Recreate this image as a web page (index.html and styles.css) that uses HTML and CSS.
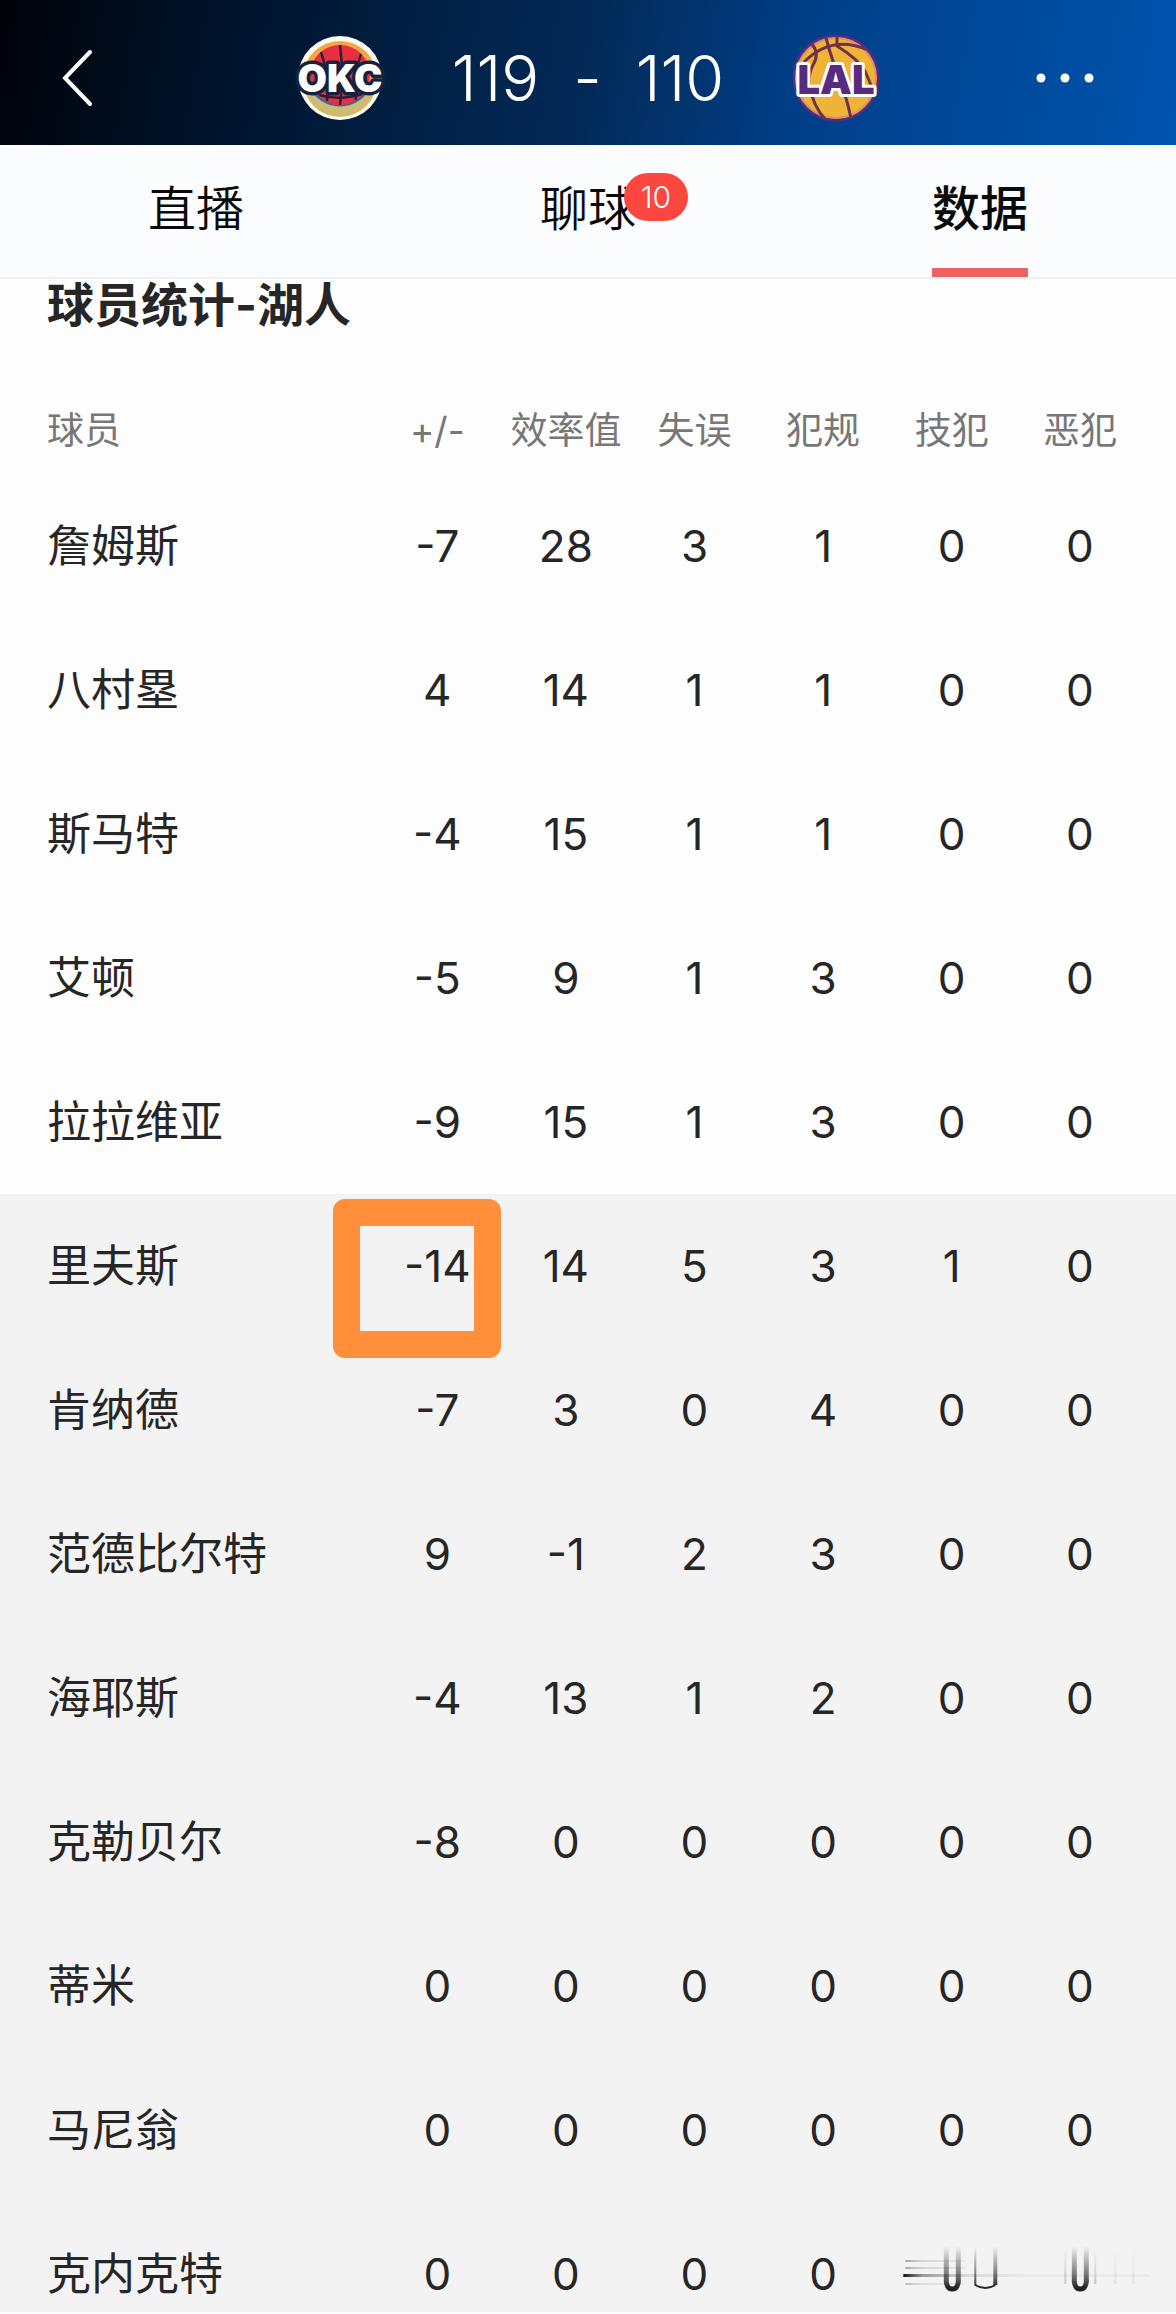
FILE: index.html
```html
<!DOCTYPE html>
<html lang="zh-CN">
<head>
  <meta charset="UTF-8">
  <meta name="viewport" content="width=device-width, initial-scale=1">
  <title>球员统计-湖人</title>
  <link rel="stylesheet" href="styles.css">
</head>
<body>
  <header class="topbar">
    <button class="icon-btn back" aria-label="返回">
      <svg width="32" height="58" viewBox="0 0 32 58"><path d="M28 3 L3 29 L28 55" fill="none" stroke="#fff" stroke-width="4" stroke-linecap="round"/></svg>
    </button>

    <div class="match">
      <svg class="logo" viewBox="0 0 88 88">
        <circle cx="44" cy="44" r="42" fill="#fffdf0"/>
        <circle cx="44" cy="44" r="37" fill="#f2a644"/>
        <path d="M7 46 A37 37 0 0 0 81 46 Z" fill="#cdbc72"/>
        <path d="M12 50 A34 34 0 0 0 76 50 Z" fill="#2b6ca8"/>
        <path d="M16 52 A30 28 0 0 0 72 52 Z" fill="#fff"/>
        <circle cx="44" cy="41" r="30" fill="#e92f3f"/>
        <g fill="none" stroke="#2b1c3a" stroke-width="2.5">
          <path d="M44 11 Q48 42 44 71"/>
          <path d="M25 18 Q34 44 31 67"/>
          <path d="M65 20 Q56 44 60 66"/>
          <path d="M23 61 Q44 67 66 60"/>
        </g>
        <text class="logo-text okc" x="44" y="58" text-anchor="middle">OKC</text>
      </svg>
      <span class="score">119</span>
      <span class="score">-</span>
      <span class="score">110</span>
      <svg class="logo" viewBox="0 0 88 88">
        <circle cx="44" cy="44" r="42" fill="#efb336" stroke="#582b80" stroke-width="3"/>
        <circle cx="44" cy="44" r="40" fill="none" stroke="#d9916c" stroke-width="2"/>
        <g fill="none" stroke="#71304a" stroke-width="3">
          <path d="M12 28 Q40 0 76 16"/>
          <path d="M20 10 Q28 20 21 31 Q17 38 17 50 Q21 73 34 86"/>
          <path d="M34 4 Q41 30 51 54 Q56 70 59 84"/>
          <path d="M45 2 V12 Q66 25 73 37 Q78 48 81 57"/>
        </g>
        <text class="logo-text lal" x="44" y="60" text-anchor="middle">LAL</text>
      </svg>
    </div>

    <button class="icon-btn more" aria-label="更多">
      <svg width="58" height="12" viewBox="0 0 58 12" fill="#fff"><circle cx="5" cy="6" r="4.5"/><circle cx="29" cy="6" r="4.5"/><circle cx="53" cy="6" r="4.5"/></svg>
    </button>
  </header>

  <nav class="tabs">
    <a href="#live">直播</a>
    <a href="#chat"><span class="tab-label">聊球<span class="badge">10</span></span></a>
    <a href="#data" class="active">数据</a>
  </nav>

  <main id="data">
    <h1>球员统计-湖人</h1>

    <table class="stats">
      <colgroup>
        <col class="col-name">
        <col span="5">
        <col class="col-last">
      </colgroup>
      <thead>
        <tr><th>球员</th><th>+/-</th><th>效率值</th><th>失误</th><th>犯规</th><th>技犯</th><th>恶犯</th></tr>
      </thead>
      <!-- 首发 -->
      <tbody>
        <tr><td>詹姆斯</td><td>-7</td><td>28</td><td>3</td><td>1</td><td>0</td><td>0</td></tr>
        <tr><td>八村塁</td><td>4</td><td>14</td><td>1</td><td>1</td><td>0</td><td>0</td></tr>
        <tr><td>斯马特</td><td>-4</td><td>15</td><td>1</td><td>1</td><td>0</td><td>0</td></tr>
        <tr><td>艾顿</td><td>-5</td><td>9</td><td>1</td><td>3</td><td>0</td><td>0</td></tr>
        <tr><td>拉拉维亚</td><td>-9</td><td>15</td><td>1</td><td>3</td><td>0</td><td>0</td></tr>
      </tbody>
      <!-- 替补 -->
      <tbody class="bench">
        <tr><td>里夫斯</td><td class="marked">-14</td><td>14</td><td>5</td><td>3</td><td>1</td><td>0</td></tr>
        <tr><td>肯纳德</td><td>-7</td><td>3</td><td>0</td><td>4</td><td>0</td><td>0</td></tr>
        <tr><td>范德比尔特</td><td>9</td><td>-1</td><td>2</td><td>3</td><td>0</td><td>0</td></tr>
        <tr><td>海耶斯</td><td>-4</td><td>13</td><td>1</td><td>2</td><td>0</td><td>0</td></tr>
        <tr><td>克勒贝尔</td><td>-8</td><td>0</td><td>0</td><td>0</td><td>0</td><td>0</td></tr>
        <tr><td>蒂米</td><td>0</td><td>0</td><td>0</td><td>0</td><td>0</td><td>0</td></tr>
        <tr><td>马尼翁</td><td>0</td><td>0</td><td>0</td><td>0</td><td>0</td><td>0</td></tr>
        <tr class="last">
          <td>克内克特</td><td>0</td><td>0</td><td>0</td><td>0</td>
          <td colspan="2" class="smear">
            <svg viewBox="0 0 288 110" aria-hidden="true">
              <defs>
                <linearGradient id="down" gradientUnits="userSpaceOnUse" x1="0" y1="44" x2="0" y2="86">
                  <stop offset="0" stop-color="#222" stop-opacity="0"/>
                  <stop offset=".7" stop-color="#222" stop-opacity=".6"/>
                  <stop offset="1" stop-color="#222"/>
                </linearGradient>
                <linearGradient id="across" gradientUnits="userSpaceOnUse" x1="16" y1="0" x2="140" y2="0">
                  <stop offset="0" stop-color="#111"/>
                  <stop offset=".15" stop-color="#111" stop-opacity=".4"/>
                  <stop offset=".5" stop-color="#111" stop-opacity=".12"/>
                  <stop offset="1" stop-color="#111" stop-opacity=".04"/>
                </linearGradient>
              </defs>
              <g fill="none" stroke="url(#down)">
                <path d="M59 45 V80 Q60 87 65 87 Q70 87 71 80 V45" stroke-width="5"/>
                <path d="M187 45 V80 Q188 87 193 87 Q198 87 199 80 V45" stroke-width="5"/>
                <path d="M88 45 V83 Q98 89 108 83" stroke-width="2"/>
                <path d="M108 45 V83" stroke-width="4"/>
                <path d="M178 50 V82 M208 50 V82" stroke-width="2" opacity=".25"/>
                <path d="M228 50 V82 M246 50 V82" stroke-width="3" opacity=".08"/>
              </g>
              <g fill="url(#across)">
                <rect x="16" y="72" width="246" height="3"/>
                <rect x="18" y="58" width="60" height="2" opacity=".35"/>
                <rect x="18" y="65" width="60" height="2" opacity=".35"/>
                <rect x="18" y="81" width="60" height="2" opacity=".25"/>
              </g>
            </svg>
          </td>
        </tr>
      </tbody>
    </table>
  </main>
</body>
</html>
```

FILE: styles.css
```css
* {
  box-sizing: border-box;
}

body {
  margin: 0;
  background: #fdfdfd;
  color: #262626;
  font-family: Inter, "Noto Sans CJK SC", sans-serif;
}

/* 顶部比分栏 */
.topbar {
  display: grid;
  grid-template-columns: 1fr auto 1fr;
  align-items: center;
  height: 145px;
  padding: 10px 62px 0;
  background: linear-gradient(100deg, #000308 0%, #001530 22%, #032a58 50%, #003f88 68%, #0054ae 100%);
  color: #fff;
}

.icon-btn {
  display: flex;
  padding: 0;
  border: none;
  background: none;
  cursor: pointer;
}

.back {
  justify-self: start;
}

.more {
  justify-self: end;
  padding-right: 20px;
}

.match {
  display: flex;
  align-items: center;
  gap: 34px;
}

.logo {
  width: 88px;
  height: 88px;
  overflow: visible;
}

.logo:first-child {
  margin-right: 34px;
}

.logo:last-child {
  margin-left: 34px;
}

.logo-text {
  font-family: Inter, sans-serif;
  font-weight: 900;
  paint-order: stroke;
  stroke-linejoin: round;
}

.okc {
  font-size: 38px;
  fill: #fff;
  stroke: #16213f;
  stroke-width: 7px;
}

.lal {
  font-size: 40px;
  fill: #582b80;
  stroke: #fff;
  stroke-width: 6px;
}

.score {
  font-size: 63px;
  font-weight: 300;
  line-height: 72px;
}

/* 标签页 */
.tabs {
  display: flex;
  height: 134px;
  background: #fbfcfd;
  border-bottom: 2px solid #f0f1f3;
}

.tabs a {
  flex: 1;
  display: flex;
  flex-direction: column;
  align-items: center;
  padding-top: 28px;
  color: #0a0a0a;
  font-size: 48px;
  font-weight: 350;
  line-height: 72px;
  text-decoration: none;
}

.tabs .active {
  font-weight: 500;
}

.tabs .active::after {
  content: "";
  width: 96px;
  height: 9px;
  margin-top: auto;
  background: #ec6262;
}

.tab-label {
  position: relative;
}

.badge {
  position: absolute;
  top: 0;
  left: 84px;
  width: 64px;
  height: 48px;
  border-radius: 24px;
  background: #fb4740;
  color: #fff;
  font-size: 30px;
  line-height: 48px;
  text-align: center;
}

/* 球员统计 */
h1 {
  margin: 0;
  padding: 0 47px;
  font-size: 47px;
  font-weight: 700;
  line-height: 52px;
}

.stats {
  width: 100%;
  table-layout: fixed;
  border-collapse: collapse;
}

.col-name {
  width: 373px;
}

.col-last {
  width: 160px;
}

th {
  padding: 75px 0 18px;
  color: #777;
  font-size: 37px;
  font-weight: 400;
  line-height: 50px;
  text-align: center;
  white-space: nowrap;
}

td {
  padding: 46px 0;
  font-size: 44px;
  line-height: 52px;
  text-align: center;
  vertical-align: top;
}

th:first-child,
td:first-child {
  padding-left: 47px;
  text-align: left;
}

th:last-child,
td:last-child {
  padding-right: 32px;
}

.bench {
  background: #f3f3f3;
}

.last td {
  padding-bottom: 12px;
}

.last .smear {
  padding: 0;
}

.smear svg {
  display: block;
  width: 100%;
  height: 110px;
}

/* 橙色标记框 */
.marked {
  position: relative;
}

.marked::before {
  content: "";
  position: absolute;
  top: 5px;
  right: 1px;
  box-sizing: border-box;
  width: 168px;
  height: 159px;
  border: 27px solid #ff8f3a;
  border-radius: 12px;
}
```
